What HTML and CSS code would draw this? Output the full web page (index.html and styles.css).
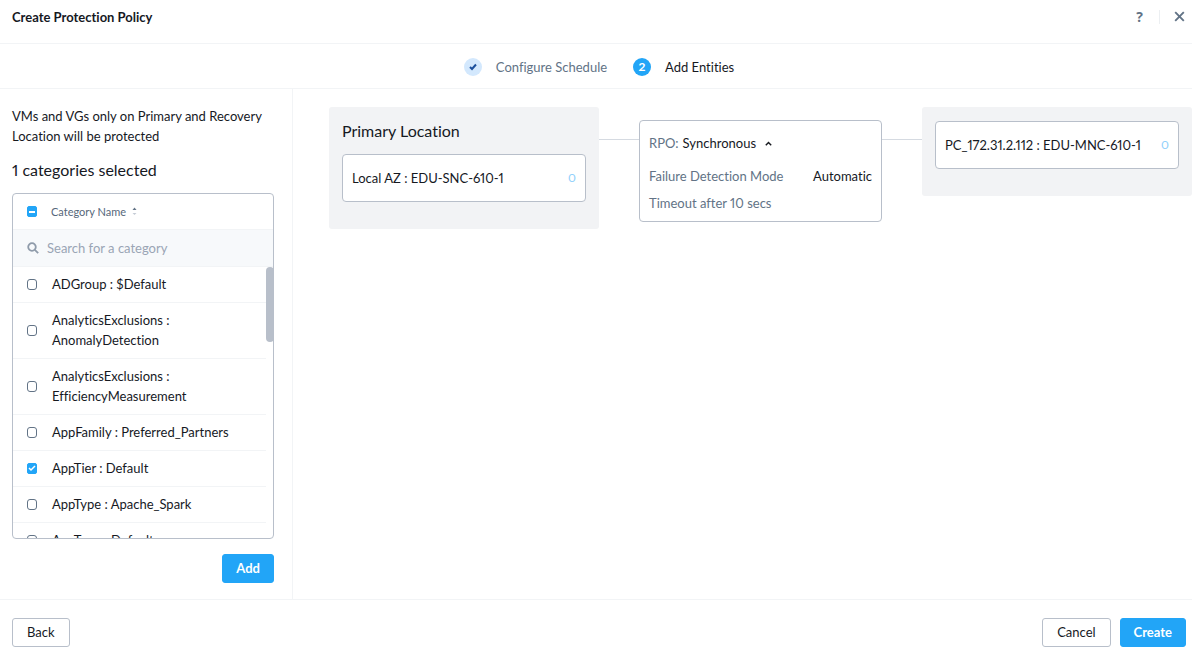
FILE: index.html
```
<!DOCTYPE html>
<html lang="en">
<head>
  <meta charset="UTF-8">
  <meta name="viewport" content="width=device-width, initial-scale=1.0">
  <title>Create Protection Policy</title>
  <link rel="stylesheet" href="styles.css">
</head>
<body>
  <header class="header">
    <h1>Create Protection Policy</h1>
    <div class="header-actions">
      <button class="icon-button help" aria-label="Help">?</button>
      <button class="icon-button close" aria-label="Close">
        <svg width="11" height="11" viewBox="0 0 11 11"><path d="M1.200 1.200l8.600 8.600M9.800 1.200l-8.600 8.600" stroke="currentColor" stroke-width="1.900" fill="none"/></svg>
      </button>
    </div>
  </header>

  <nav class="steps">
    <div class="step done">
      <span class="step-mark"><svg width="8" height="8" viewBox="0 0 8 8"><path d="M1 4l2 2 4-4.500" stroke="currentColor" stroke-width="2" fill="none"/></svg></span>
      <span>Configure Schedule</span>
    </div>
    <div class="step current">
      <span class="step-mark">2</span>
      <span>Add Entities</span>
    </div>
  </nav>

  <main class="main">
    <aside class="sidebar">
      <p class="note">VMs and VGs only on Primary and Recovery Location will be protected</p>
      <h2>1 categories selected</h2>

      <div class="category-box">
        <div class="category-head">
          <input type="checkbox" class="partial" id="all">
          <label for="all">Category Name</label>
          <svg width="5" height="9" viewBox="0 0 5 9"><path d="M.500 3l2-2.500 2 2.500z" fill="#627386"/><path d="M.500 6l2 2 2-2z" fill="#c4cbd5"/></svg>
        </div>
        <div class="category-search">
          <svg width="12" height="12" viewBox="0 0 12 12"><circle cx="5" cy="5" r="3.800" stroke="currentColor" stroke-width="1.800" fill="none"/><path d="M7.800 7.800l3.400 3.400" stroke="currentColor" stroke-width="1.800"/></svg>
          <input type="text" placeholder="Search for a category" aria-label="Search for a category">
        </div>
        <div class="category-scroll">
          <ul class="category-list">
            <li><input type="checkbox" id="c1"><label for="c1">ADGroup : $Default</label></li>
            <li><input type="checkbox" id="c2"><label for="c2">AnalyticsExclusions : AnomalyDetection</label></li>
            <li><input type="checkbox" id="c3"><label for="c3">AnalyticsExclusions : EfficiencyMeasurement</label></li>
            <li><input type="checkbox" id="c4"><label for="c4">AppFamily : Preferred_Partners</label></li>
            <li><input type="checkbox" id="c5" checked><label for="c5">AppTier : Default</label></li>
            <li><input type="checkbox" id="c6"><label for="c6">AppType : Apache_Spark</label></li>
            <li><input type="checkbox" id="c7"><label for="c7">AppType : Default</label></li>
          </ul>
          <span class="scroll-thumb"></span>
        </div>
      </div>

      <button class="btn primary add">Add</button>
    </aside>

    <section class="canvas">
      <div class="location">
        <h2>Primary Location</h2>
        <div class="site"><span>Local AZ : EDU-SNC-610-1</span><span class="count">0</span></div>
      </div>
      <div class="connector"></div>
      <div class="rpo">
        <button class="rpo-toggle">
          <span class="muted">RPO:</span> Synchronous
          <svg width="7" height="5" viewBox="0 0 7 5"><path d="M.800 4.200l2.700-2.800 2.700 2.800" stroke="currentColor" stroke-width="1.400" fill="none"/></svg>
        </button>
        <div class="rpo-row"><span class="muted">Failure Detection Mode</span><span>Automatic</span></div>
        <div class="muted">Timeout after 10 secs</div>
      </div>
      <div class="connector"></div>
      <div class="location">
        <div class="site"><span>PC_172.31.2.112 : EDU-MNC-610-1</span><span class="count">0</span></div>
      </div>
    </section>
  </main>

  <footer class="footer">
    <button class="btn">Back</button>
    <div class="footer-right">
      <button class="btn">Cancel</button>
      <button class="btn primary">Create</button>
    </div>
  </footer>
</body>
</html>
```
FILE: styles.css
```
* {
  box-sizing: border-box;
}
body {
  margin: 0;
  height: 100vh;
  display: flex;
  flex-direction: column;
  font-family: Lato, 'Liberation Sans', sans-serif;
  font-size: 13px;
  font-variant-ligatures: none;
  font-variant-numeric: proportional-nums;
  line-height: 20px;
  color: #16191f;
  background: #fff;
}
h1, h2, p, ul {
  margin: 0;
  padding: 0;
}
button, input {
  font: inherit;
  font-variant-ligatures: none;
  color: inherit;
}
button {
  cursor: pointer;
}
.header {
  display: flex;
  justify-content: space-between;
  align-items: center;
  height: 44px;
  padding: 0 7px 10px 12px;
  border-bottom: 1px solid #f2f4f6;
}
h1 {
  font-size: 13px;
  font-weight: bold;
}
.header-actions {
  display: flex;
  color: #627386;
}
.icon-button {
  display: flex;
  align-items: center;
  height: 14px;
  padding: 0;
  border: none;
  background: none;
}
.help {
  padding-right: 16px;
  font-family: 'Open Sans', sans-serif;
  font-size: 14px;
  font-weight: bold;
}
.close {
  padding-left: 14px;
  border-left: 1px solid #eceff2;
}
.steps {
  display: flex;
  justify-content: center;
  gap: 26px;
  padding: 13px 0 11px 6px;
  border-bottom: 1px solid #f2f4f6;
}
.step {
  display: flex;
  align-items: center;
  gap: 14px;
}
.step-mark {
  display: flex;
  align-items: center;
  justify-content: center;
  width: 18px;
  height: 18px;
  border-radius: 50%;
}
.done {
  color: #627386;
}
.done .step-mark {
  color: #1b4f9c;
  background: #d3e8fd;
}
.current .step-mark {
  color: #fff;
  background: #22a5f7;
  font-size: 12px;
  font-weight: bold;
}
.main {
  display: flex;
  flex: 1;
  min-height: 0;
}
.sidebar {
  display: flex;
  flex-direction: column;
  width: 293px;
  padding: 17px 18px 16px 12px;
  border-right: 1px solid #f2f4f6;
}
h2 {
  font-size: 16px;
  font-weight: normal;
  line-height: 20px;
}
.sidebar h2 {
  margin: 14px 0 13px;
}
.category-box {
  display: flex;
  flex-direction: column;
  flex: 1;
  min-height: 0;
  border: 1px solid #b8bfca;
  border-radius: 4px;
}
.category-head, .category-search {
  display: flex;
  align-items: center;
  height: 36px;
  border-bottom: 1px solid #f2f4f6;
}
.category-head {
  padding-left: 14px;
  font-size: 11px;
  color: #56677a;
}
.category-head label {
  margin: 0 6px 0 14px;
}
.category-search {
  height: 37px;
  gap: 8px;
  padding: 0 14px;
  color: #8f9baa;
  background: #f7f9fb;
}
.category-search input {
  flex: 1;
  min-width: 0;
  padding: 0;
  border: none;
  outline: none;
  background: none;
}
.category-search input::placeholder {
  color: #9aa5b5;
}
.category-scroll {
  position: relative;
  flex: 1;
  min-height: 0;
}
.category-list {
  height: 100%;
  margin-right: 7px;
  overflow-y: auto;
  scrollbar-width: none;
  list-style: none;
}
.category-list li {
  display: flex;
  align-items: center;
  gap: 15px;
  padding: 7px 24px 8px 14px;
  border-bottom: 1px solid #f2f4f6;
}
.scroll-thumb {
  position: absolute;
  top: 0;
  right: -1px;
  width: 8px;
  height: 75px;
  border-radius: 4px;
  background: #b8bfca;
}
input[type="checkbox"] {
  appearance: none;
  flex: none;
  width: 10px;
  height: 11px;
  margin: 0;
  border: 1px solid #627386;
  border-radius: 3px;
  background: #fff center no-repeat;
}
input[type="checkbox"]:checked {
  border-color: #22a5f7;
  border-radius: 2px;
  background-color: #22a5f7;
  background-image: url("data:image/svg+xml,%3Csvg xmlns='http://www.w3.org/2000/svg' width='8' height='8'%3E%3Cpath d='M1 4l2 2 4-4' stroke='white' stroke-width='1.500' fill='none'/%3E%3C/svg%3E");
}
input[type="checkbox"].partial {
  border-color: #22a5f7;
  border-radius: 2px;
  background: linear-gradient(#fff, #fff) center / 6px 2px no-repeat #22a5f7;
}
.btn {
  height: 29px;
  padding: 0 14px 1px;
  border: 1px solid #b8bfca;
  border-radius: 3px;
  background: #fff;
}
.primary {
  padding: 0 13px 1px;
  border-color: #22a5f7;
  background: #22a5f7;
  color: #fff;
  font-weight: bold;
}
.add {
  align-self: flex-end;
  margin-top: 15px;
}
.canvas {
  display: flex;
  align-items: flex-start;
  flex: 1;
  padding: 18px 0 0 36px;
}
.location {
  flex: 1;
  padding: 14px 13px 27px;
  border-radius: 3px;
  background: #f2f3f5;
}
.location h2 {
  margin-bottom: 13px;
}
.site {
  display: flex;
  justify-content: space-between;
  padding: 13px 9px 13px 9px;
  border: 1px solid #b8bfca;
  border-radius: 4px;
  background: #fff;
}
.count {
  color: #8fd0fb;
  font-size: 12px;
}
.connector {
  width: 40px;
  margin-top: 32px;
  border-top: 1px solid #d5dae1;
}
.rpo {
  width: 243px;
  margin-top: 13px;
  padding: 12px 9px 8px;
  border: 1px solid #b8bfca;
  border-radius: 4px;
}
.rpo-toggle {
  display: flex;
  align-items: center;
  gap: 4px;
  padding: 0;
  border: none;
  background: none;
}
.rpo-toggle svg {
  margin-left: 5px;
}
.rpo-row {
  display: flex;
  justify-content: space-between;
  margin: 13px 0 7px;
}
.muted {
  color: #627386;
}
.footer {
  display: flex;
  justify-content: space-between;
  padding: 18px 6px 8px 12px;
  border-top: 1px solid #f2f4f6;
}
.footer-right {
  display: flex;
  gap: 9px;
}
```
